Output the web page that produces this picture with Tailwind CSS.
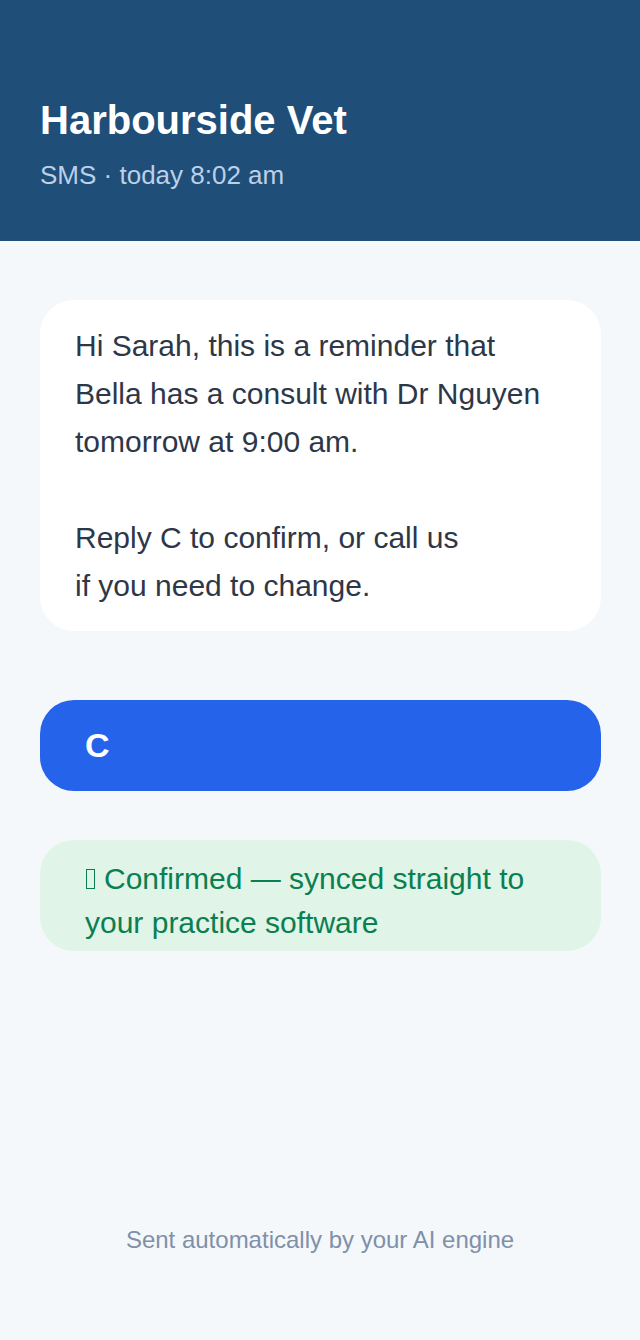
<!DOCTYPE html>
<html lang="en">
<head>
<meta charset="utf-8">
<meta name="viewport" content="width=device-width, initial-scale=1">
<title>Harbourside Vet</title>
<script src="https://cdn.jsdelivr.net/npm/@tailwindcss/browser@4"></script>
</head>
<body class="flex min-h-screen flex-col bg-[#f4f8fb] font-['Liberation_Sans',Arial,sans-serif] text-[#2d3748]">
<header class="bg-[#1f4e79] px-10 pt-24 pb-[50px]">
<h1 class="text-[40px] leading-12 font-bold text-white">Harbourside Vet</h1>
<p class="mt-[15px] text-[26px] leading-8 text-[#bcd0e8]">SMS · today 8:02 am</p>
</header>
<main class="flex flex-col pt-[59px] pr-[39px] pl-10">
<div class="rounded-[34px] bg-white px-[35px] pt-[22px] pb-[21px] text-[30px] leading-12">
<p>Hi Sarah, this is a reminder that<br>Bella has a consult with Dr Nguyen<br>tomorrow at 9:00 am.</p>
<p class="mt-12">Reply C to confirm, or call us<br>if you need to change.</p>
</div>
<div class="mt-[69px] rounded-[34px] bg-[#2563eb] px-[45px] pt-[25px] pb-[26px] text-[34px] leading-10 font-bold text-white">C</div>
<div class="mt-[49px] rounded-[34px] bg-[#e0f4e8] px-[45px] pt-[17px] pb-[6px] text-[30px] leading-11 text-[#0a7f50]">
<p><span class="mr-[9px] ml-px inline-block h-5 w-[9px] border border-current"></span>Confirmed — synced straight to<br>your practice software</p>
</div>
</main>
<footer class="mt-auto pb-[84px] text-center text-[24px] leading-8 text-[#8090a8]">Sent automatically by your AI engine</footer>
</body>
</html>
